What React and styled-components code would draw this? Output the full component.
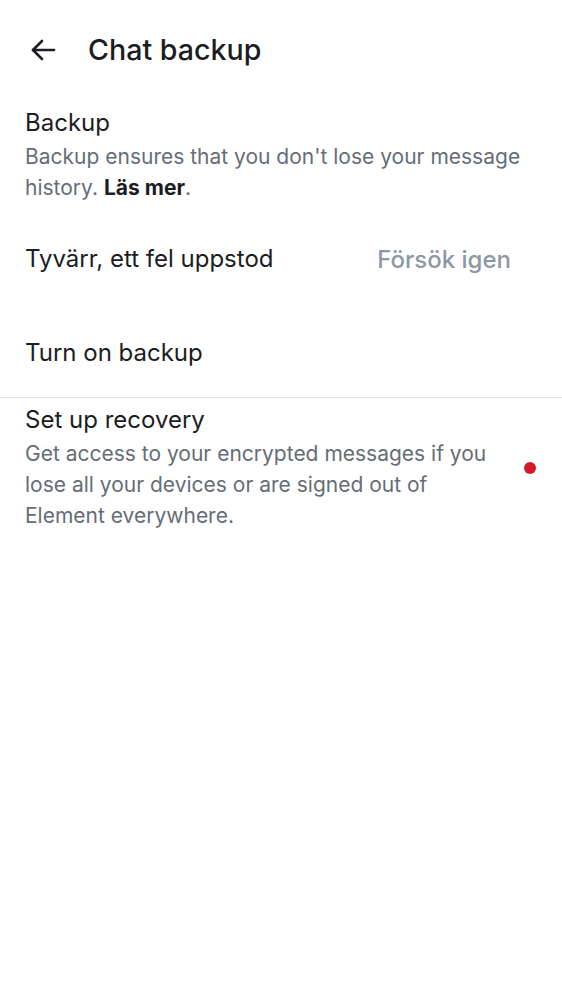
import React from 'react'
import styled, { createGlobalStyle } from 'styled-components';

const GlobalStyle = createGlobalStyle`
body {
    margin: 0;
    background: #fff;
    font-family: Inter, Roboto, "Noto Sans", sans-serif;
}
`;

const App = () => {
    return (
        <>
            <GlobalStyle />
            <Page>
                <TopBar>
                    <BackButton aria-label="Back">
                        <svg width="26" height="24" viewBox="0 0 26 24" fill="none" stroke="#1b1d22" strokeWidth="2.6" strokeLinecap="round" strokeLinejoin="round">
                            <path d="M24 12H3" />
                            <path d="M12 3l-9 9 9 9" />
                        </svg>
                    </BackButton>
                    <Title>Chat backup</Title>
                </TopBar>

                <Section>
                    <ItemTitle>Backup</ItemTitle>
                    <ItemText>
                        Backup ensures that you don't lose your message history. <b>Läs mer</b>.
                    </ItemText>
                </Section>

                <ErrorRow>
                    <ItemTitle>Tyvärr, ett fel uppstod</ItemTitle>
                    <RetryButton>Försök igen</RetryButton>
                </ErrorRow>

                <ActionRow>
                    <ItemTitle>Turn on backup</ItemTitle>
                </ActionRow>

                <Divider />

                <RecoveryRow>
                    <RecoveryBody>
                        <ItemTitle>Set up recovery</ItemTitle>
                        <ItemText>
                            Get access to your encrypted messages if you lose all your devices or are signed out of Element everywhere.
                        </ItemText>
                    </RecoveryBody>
                    <Dot />
                </RecoveryRow>
            </Page>
        </>
    )
}

export default App


const Page = styled.div`
width: 562px;
min-height: 1000px;
background: #fff;
display: flex;
flex-direction: column;
`;

const TopBar = styled.div`
display: flex;
align-items: center;
height: 100px;
padding: 0 0 0 30px;
box-sizing: border-box;
`;

const BackButton = styled.button`
border: none;
background: none;
padding: 0;
width: 26px;
height: 24px;
display: flex;
align-items: center;
justify-content: center;
margin-right: 32px;
`;

const Title = styled.h1`
margin: 0;
font-size: 28.6px;
line-height: 34px;
font-weight: 500;
color: #1b1d22;
`;

const Section = styled.div`
padding: 8px 25px 0;
display: flex;
flex-direction: column;
`;

const ItemTitle = styled.div`
font-size: 24px;
line-height: 30px;
color: #1b1d22;
`;

const ItemText = styled.div`
font-size: 21px;
line-height: 31px;
color: #656d77;
margin-top: 3px;
b {
    color: #1b1d22;
    font-weight: 700;
}
`;

const ErrorRow = styled.div`
display: flex;
justify-content: space-between;
align-items: center;
padding: 34px 51px 0 25px;
height: 44px;
`;

const RetryButton = styled.div`
font-size: 24px;
font-weight: 500;
color: #8d97a5;
`;

const ActionRow = styled.div`
padding: 57px 25px 29px;
display: flex;
`;

const Divider = styled.div`
height: 1px;
background: #e1e4e8;
`;

const RecoveryRow = styled.div`
display: flex;
align-items: center;
padding: 7px 26px 0 25px;
gap: 20px;
`;

const RecoveryBody = styled.div`
flex: 1;
display: flex;
flex-direction: column;
`;

const Dot = styled.span`
width: 12px;
height: 12px;
border-radius: 50%;
background: #d51928;
flex-shrink: 0;
`;
